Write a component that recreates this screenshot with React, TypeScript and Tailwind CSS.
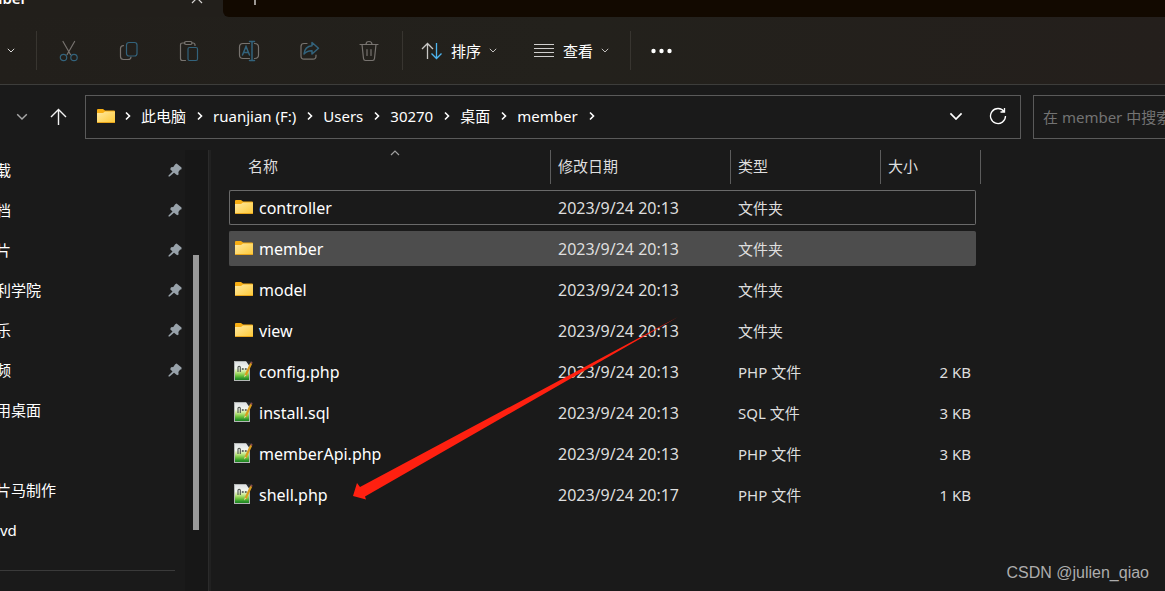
import { clsx } from 'clsx'
import type { ReactNode } from 'react'

// ═══════════════════════════════════════════════════════════════════
// DATA
// ═══════════════════════════════════════════════════════════════════
interface FileRow {
  name: string
  date: string
  type: string
  size?: string
  state?: 'focused' | 'hovered'
}

const FILES: FileRow[] = [
  { name: 'controller',    date: '2023/9/24 20:13', type: '文件夹', state: 'focused' },
  { name: 'member',        date: '2023/9/24 20:13', type: '文件夹', state: 'hovered' },
  { name: 'model',         date: '2023/9/24 20:13', type: '文件夹' },
  { name: 'view',          date: '2023/9/24 20:13', type: '文件夹' },
  { name: 'config.php',    date: '2023/9/24 20:13', type: 'PHP 文件', size: '2 KB' },
  { name: 'install.sql',   date: '2023/9/24 20:13', type: 'SQL 文件', size: '3 KB' },
  { name: 'memberApi.php', date: '2023/9/24 20:13', type: 'PHP 文件', size: '3 KB' },
  { name: 'shell.php',     date: '2023/9/24 20:17', type: 'PHP 文件', size: '1 KB' },
]

const CRUMBS = ['此电脑', 'ruanjian (F:)', 'Users', '30270', '桌面', 'member']

const PLACES = [
  { label: '载', pinned: true },
  { label: '档', pinned: true },
  { label: '片', pinned: true },
  { label: '利学院', pinned: true },
  { label: '乐', pinned: true },
  { label: '频', pinned: true },
  { label: '用桌面' },
  { label: '' },
  { label: '片马制作' },
  { label: 'vd' },
]

// ═══════════════════════════════════════════════════════════════════
// ICONS
// ═══════════════════════════════════════════════════════════════════
function Chevron({ dir = 'down', className }: { dir?: 'down' | 'up' | 'right'; className?: string }) {
  const paths = {
    down:  'M1 1l4 4 4-4',
    up:    'M1 5l4-4 4 4',
    right: 'M1 1.500l3.500 3.500L1 8.500',
  }
  return (
    <svg
      viewBox={dir === 'right' ? '0 0 6 10' : '0 0 10 6'}
      fill="none" stroke="currentColor" strokeWidth={dir === 'right' ? 1.6 : 1.2}
      className={clsx('shrink-0', className)}
    >
      <path d={paths[dir]} />
    </svg>
  )
}

function FolderIcon() {
  return (
    <svg width="18" height="15" viewBox="0 0 18 15" className="shrink-0">
      <defs>
        <linearGradient id="folder" x1="0" y1="0" x2="1" y2="1">
          <stop offset="0" stopColor="#ffe9a2" />
          <stop offset="1" stopColor="#fec935" />
        </linearGradient>
      </defs>
      <path d="M0 1q0-1 1-1h5l2 1.500h9q1 0 1 1V8H0z" fill="#f8ae13" />
      <path d="M0 4h6l2-1.500h10V13q0 1-1 1H1q-1 0-1-1z" fill="url(#folder)" />
      <path d="M0 13h18q0 1-1 1H1q-1 0-1-1z" fill="#e9a51c" />
    </svg>
  )
}

function NotepadIcon() {
  return (
    <svg width="19" height="21" viewBox="0 0 19 21" className="-ml-px shrink-0">
      <defs>
        <linearGradient id="page" x1="0" y1="0" x2="0" y2="1">
          <stop offset="0" stopColor="#dcdfe3" />
          <stop offset="0.350" stopColor="#f4f8f0" />
          <stop offset="0.550" stopColor="#c6e88a" />
          <stop offset="0.750" stopColor="#6cc23c" />
          <stop offset="0.900" stopColor="#2b932a" />
          <stop offset="1" stopColor="#1d7c1d" />
        </linearGradient>
      </defs>
      <rect x="0.500" y="0.500" width="15" height="19" fill="url(#page)" stroke="#b3b7b5" />
      <path d="M4 11V6q1.200-1.500 2.300 0V11" fill="none" stroke="#4b504b" strokeWidth="1.100" />
      <path d="M7.700 8h2.200M8.800 7v2M10.800 8h2M11.800 7v2" stroke="#4b504b" strokeWidth="0.900" />
      <path d="M12 0h6.500l-3.500 4.500z" fill="#26282b" />
      <path d="M17.300 2L11.500 14.500" stroke="#d99c1d" strokeWidth="2.200" />
      <path d="M16.800 1.400l1.400.7" stroke="#8a4a4e" strokeWidth="2" />
      <path d="M10.800 13.500l-.8 3 2.200-2z" fill="#f1d29a" />
    </svg>
  )
}

function PinIcon() {
  return (
    <svg width="14" height="14" viewBox="0 0 14 14" className="shrink-0 text-[#98a2aa]">
      <path d="M7.200 1.300L8.600.400 13.500 4.500v1.700l-1.500.6-1.600 2.100.2 2.500-1.400.8L6 9.800 1.600 13.600H.500v-1L4.500 8.500 2.200 6.300l.8-2 2.300-.2z" fill="currentColor" />
    </svg>
  )
}

function ToolSvg({ children }: { children: ReactNode }) {
  return (
    <svg width="22" height="22" viewBox="0 0 22 22" fill="none" stroke="#77736f" strokeWidth="1.2" strokeLinecap="round">
      {children}
    </svg>
  )
}

const BLUE = '#33637c'

const TOOLS = [
  {
    label: '剪切',
    icon: (
      <>
        <path d="M5 1.500l7.600 13.200M16.600 1.500L9 14.700" />
        <circle cx="5.500" cy="17.500" r="3.200" stroke={BLUE} />
        <circle cx="16" cy="17.500" r="3.200" stroke={BLUE} />
      </>
    ),
  },
  {
    label: '复制',
    icon: (
      <>
        <path d="M5.500 5.600Q2.500 5.600 2.500 8.500v8q0 3 3 3h4.500q3 0 3-2.500" />
        <rect x="8.500" y="2.500" width="10.500" height="13.500" rx="2.500" stroke={BLUE} />
      </>
    ),
  },
  {
    label: '粘贴',
    icon: (
      <>
        <path d="M7 3H4.500Q2.500 3 2.500 5v13.500q0 2 2 2h3M14 3h1q2 0 2 2v.500" />
        <rect x="6.500" y="1.500" width="7.500" height="3" rx="1.500" />
        <rect x="10" y="7.500" width="9.500" height="13" rx="1.500" stroke={BLUE} />
      </>
    ),
  },
  {
    label: '重命名',
    icon: (
      <>
        <path d="M11.500 3.500H5Q1.500 3.500 1.500 7v8q0 3.500 3.500 3.500h6.500M16.500 3.500q4 0 4 3.500v8q0 3.500-4 3.500" />
        <path d="M4.500 15L8 6.500l3.500 8.500M5.700 12.500h4.600M14 1.500v19M11.500 1.500h5M11.500 20.500h5" stroke={BLUE} strokeWidth="1.5" />
      </>
    ),
  },
  {
    label: '共享',
    icon: (
      <>
        <path d="M9 3.500H6Q3 3.500 3 6.500v9.500q0 3.200 3 3.200h9q3 0 3-3.200v-1" />
        <path d="M14 2.500l6.500 5.700L14 14v-3.300q-5-.2-8 3.300.8-7.500 8-8.200z" stroke={BLUE} strokeWidth="1.5" strokeLinejoin="round" />
      </>
    ),
  },
  {
    label: '删除',
    icon: (
      <>
        <path d="M2 4.500h18M8 4.500q0-3 3-3t3 3M4 4.500l1.500 14q.2 2 2 2h7q1.800 0 2-2L18 4.500M9 9.500v6M13 9.500v6" />
      </>
    ),
  },
]

// ═══════════════════════════════════════════════════════════════════
// TAB STRIP
// ═══════════════════════════════════════════════════════════════════
function TabStrip() {
  return (
    <header className="flex h-[17px] shrink-0 items-end overflow-hidden bg-[#221f1b]">
      <div className="flex h-[38px] w-[223px] shrink-0 items-center justify-between pr-5 text-[15px] font-semibold">
        <span className="-ml-3">mber</span>
        <button aria-label="关闭标签页">
          <svg width="12" height="12" viewBox="0 0 12 12" stroke="#d6d4d2" strokeWidth="1.2">
            <path d="M1 1l10 10M11 1L1 11" />
          </svg>
        </button>
      </div>
      <div className="flex h-[38px] flex-1 items-center rounded-bl-md bg-[#120900] pl-6">
        <button aria-label="新建标签页">
          <svg width="16" height="14" viewBox="0 0 16 14" stroke="#d6d4d2" strokeWidth="1.4">
            <path d="M8 0v14M1 7h14" />
          </svg>
        </button>
      </div>
    </header>
  )
}

// ═══════════════════════════════════════════════════════════════════
// TOOLBAR
// ═══════════════════════════════════════════════════════════════════
function Rule() {
  return <span className="h-[39px] w-px shrink-0 bg-[#383530]" />
}

function Toolbar() {
  return (
    <div className="flex h-17 shrink-0 items-center border-b border-[#3d3d3b] bg-linear-to-r from-[#221f1b] via-[#23211c] to-[#241f1c]">
      <button aria-label="新建" className="flex w-9 shrink-0 pl-[7px]">
        <Chevron className="w-2 text-[#e4e3e2]" />
      </button>
      <Rule />
      <div className="mr-[3px] ml-0.5 flex">
        {TOOLS.map(tool => (
          <button key={tool.label} aria-label={tool.label} disabled className="flex w-15 justify-center">
            <ToolSvg>{tool.icon}</ToolSvg>
          </button>
        ))}
      </div>
      <Rule />
      <button className="ml-[18px] flex items-center">
        <svg width="22" height="18" viewBox="0 0 22 18" fill="none" strokeWidth="1.3">
          <path d="M6.500 17V1.500M1 7l5.500-5.500L12 7" stroke="#c9c8c6" />
          <path d="M15.500 1v15.500M10.500 11.500l5 5 5-5" stroke="#4cb4ef" />
        </svg>
        <span className="ml-2">排序</span>
        <Chevron className="ml-2 w-2 text-[#cbc9c7]" />
      </button>
      <button className="ml-9 flex items-center">
        <svg width="22" height="14" viewBox="0 0 22 14" stroke="#cfcecd">
          <path d="M1 .500h20M1 4.500h20M1 8.500h20M1 12.500h20" />
        </svg>
        <span className="ml-2">查看</span>
        <Chevron className="ml-2 w-2 text-[#cbc9c7]" />
      </button>
      <span className="ml-[21px] flex"><Rule /></span>
      <button aria-label="更多" className="ml-5">
        <svg width="21" height="6" viewBox="0 0 21 6" fill="#fff">
          <circle cx="2.500" cy="3" r="2.200" />
          <circle cx="10.500" cy="3" r="2.200" />
          <circle cx="18.500" cy="3" r="2.200" />
        </svg>
      </button>
    </div>
  )
}

// ═══════════════════════════════════════════════════════════════════
// ADDRESS BAR
// ═══════════════════════════════════════════════════════════════════
function AddressBar() {
  return (
    <div className="flex shrink-0 pt-2.5 pb-[5px]">
      <div className="flex w-[85px] shrink-0 items-center pl-4">
        <button aria-label="最近浏览的位置">
          <Chevron className="w-3 text-[#a8a8a8]" />
        </button>
        <button aria-label="上一级" className="ml-[22px]">
          <svg width="17" height="18" viewBox="0 0 17 18" fill="none" stroke="#f2f2f2" strokeWidth="1.4">
            <path d="M8.500 17V1.500M1 9l7.500-7.500L16 9" />
          </svg>
        </button>
      </div>

      <nav aria-label="地址" className="flex h-11 min-w-0 flex-1 items-center border border-[#5a5a5a] pr-[13px] pb-0.5 pl-[11px]">
        <FolderIcon />
        <Chevron dir="right" className="mx-2.5 w-1.5" />
        {CRUMBS.map(crumb => (
          <span key={crumb} className="flex items-center whitespace-nowrap">
            <button>{crumb}</button>
            <Chevron dir="right" className="mr-2.5 ml-[11px] w-1.5" />
          </span>
        ))}
        <button aria-label="以前的位置" className="ml-auto">
          <Chevron className="w-3.5" />
        </button>
        <button aria-label="刷新" className="ml-[26px]">
          <svg width="18" height="18" viewBox="0 0 18 18" fill="none" stroke="currentColor" strokeWidth="1.3">
            <path d="M15.200 4.800A7.500 7.500 0 1 0 16.500 9M15.500 1V5H11.500" />
          </svg>
        </button>
      </nav>

      <input
        type="text"
        aria-label="搜索"
        placeholder="在 member 中搜索"
        className="ml-3 h-11 w-[132px] shrink-0 border border-r-0 border-[#5a5a5a] bg-transparent pl-[9px] outline-none placeholder:text-[#737373]"
      />
    </div>
  )
}

// ═══════════════════════════════════════════════════════════════════
// SIDEBAR
// ═══════════════════════════════════════════════════════════════════
function Sidebar() {
  return (
    <aside className="mt-1.5 flex w-[211px] shrink-0 overflow-hidden">
      <div className="min-w-0 flex-1">
        <ul className="mr-2.5 border-b border-[#3a3a3a] pb-5">
          {PLACES.map(place => (
            <li key={place.label} className="flex h-10 items-center justify-between">
              {place.label && (
                <button className={clsx('whitespace-nowrap', place.label !== 'vd' && '-ml-1')}>
                  {place.label}
                </button>
              )}
              {place.pinned && <span className="-mr-[7px]"><PinIcon /></span>}
            </li>
          ))}
        </ul>
      </div>
      <div className="w-[23px] bg-[#171717] pt-[105px] pl-2">
        <div className="h-[275px] w-1.5 bg-[#999999]" />
      </div>
      <div className="w-[3px] border-l border-[#2b2b2b] bg-[#212121]" />
    </aside>
  )
}

// ═══════════════════════════════════════════════════════════════════
// FILE TABLE
// ═══════════════════════════════════════════════════════════════════
const ROW_STATES = {
  focused: 'border-[#6a6a6a]',
  hovered: 'border-[#4d4d4d] bg-[#4d4d4d]',
  none:    'border-transparent',
}

function FileTable() {
  const head = 'border-r border-[#5c5c5c] p-0 pb-0.5 font-normal'
  return (
    <table className="ml-[18px] w-[752px] shrink-0 table-fixed border-separate border-spacing-x-0 border-spacing-y-1.5 self-start text-left text-[#dedede]">
      <colgroup>
        <col className="w-[322px]" />
        <col className="w-[180px]" />
        <col className="w-[150px]" />
        <col className="w-[95px]" />
        <col className="w-[5px]" />
      </colgroup>
      <thead>
        <tr className="h-[34px]">
          <th className={clsx(head, 'relative pl-[19px]')}>
            名称
            <Chevron dir="up" className="absolute top-0 left-1/2 w-2.5 text-[#a0a0a0]" />
          </th>
          <th className={clsx(head, 'pl-[7px]')}>修改日期</th>
          <th className={clsx(head, 'pl-[7px]')}>类型</th>
          <th className={clsx(head, 'pl-[7px]')} colSpan={2}>大小</th>
        </tr>
      </thead>
      <tbody>
        {FILES.map(file => {
          const cell = clsx('border-y p-0', ROW_STATES[file.state ?? 'none'])
          return (
            <tr key={file.name} className="h-[35px]">
              <td className={clsx(cell, 'rounded-l-xs border-l pl-[5px] text-base/5 text-white')}>
                <span className="flex items-center">
                  <span className="flex w-6">
                    {file.size ? <NotepadIcon /> : <FolderIcon />}
                  </span>
                  {file.name}
                </span>
              </td>
              <td className={clsx(cell, 'pl-[7px] text-base/5')}>{file.date}</td>
              <td className={clsx(cell, 'pl-[7px]')}>{file.type}</td>
              <td className={clsx(cell, 'rounded-r-xs border-r pr-1 text-right')}>{file.size}</td>
            </tr>
          )
        })}
      </tbody>
    </table>
  )
}

// ═══════════════════════════════════════════════════════════════════
// APP
// ═══════════════════════════════════════════════════════════════════
export default function App() {
  return (
    <div className="relative flex h-screen flex-col overflow-hidden bg-[#1a1a1a] font-['Noto_Sans','Noto_Sans_CJK_SC',sans-serif] text-[15px]/5 text-white">
      <TabStrip />
      <Toolbar />
      <AddressBar />
      <main className="flex min-h-0 flex-1">
        <Sidebar />
        <FileTable />
      </main>

      {/* arrow pointing at shell.php */}
      <svg width="326" height="184" viewBox="0 0 326 184" className="pointer-events-none absolute top-[316px] left-[353px]">
        <path d="M0 180L4 167l3 4L325 1 12 180.500l1 3z" fill="#ff2010" />
      </svg>
      <p className="absolute right-4 bottom-2 font-['Liberation_Sans',sans-serif] text-base/5 text-[#adadad]">
        CSDN @julien_qiao
      </p>
    </div>
  )
}
